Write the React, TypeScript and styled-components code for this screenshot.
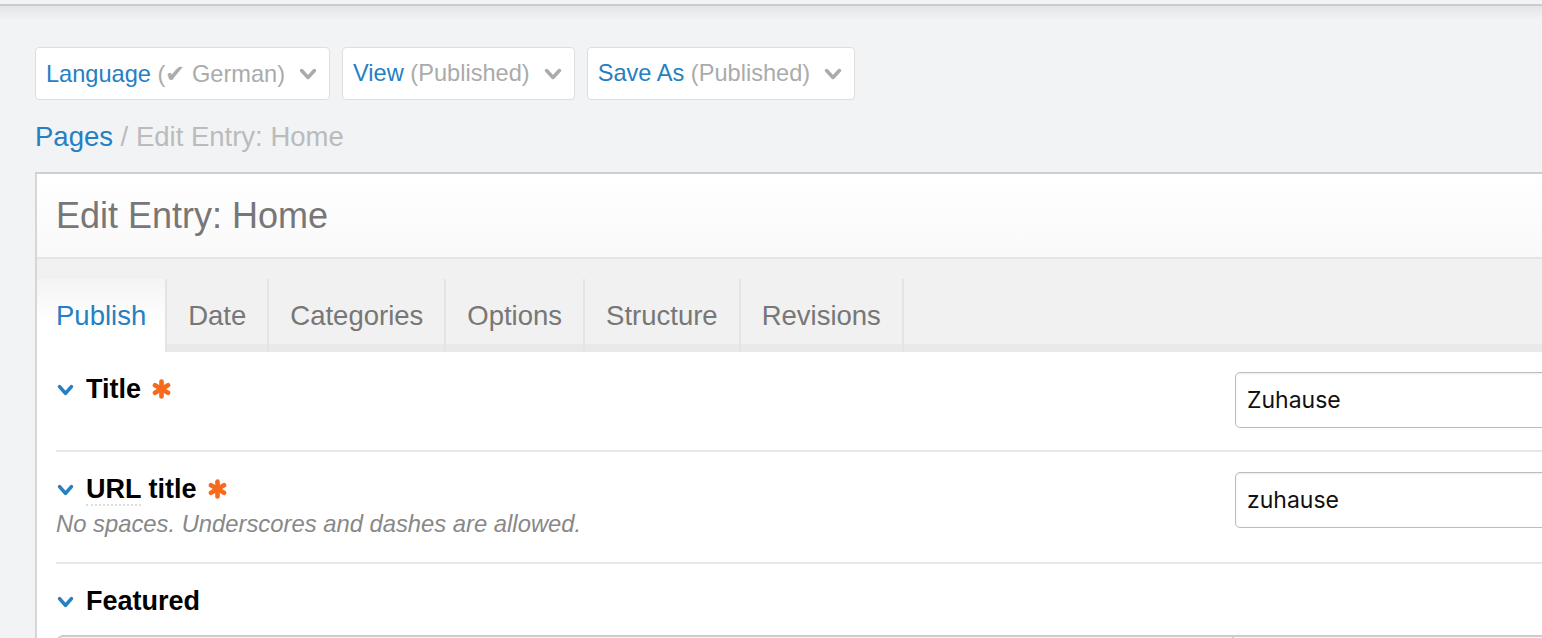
import React from 'react';
import styled, { createGlobalStyle } from 'styled-components';

const GlobalStyle = createGlobalStyle`
    html, body {
        margin: 0;
        padding: 0;
        background: #f2f3f5;
        overflow: hidden;
    }
    body {
        font-family: "Liberation Sans", Arial, sans-serif;
    }
`;

const BLUE = '#2580c3';

const TopEdge = styled.div`
    height: 4px;
    background: #f2f3f5;
    border-bottom: 2px solid #cbcbcb;
`;

const Page = styled.div`
    width: 1740px;
    padding: 41px 35px 0;
    background: linear-gradient(to bottom, #e4e5e6 0, #f2f3f5 14px);
`;

const Toolbar = styled.div`
    display: flex;
    gap: 12px;
`;

const DropButton = styled.button`
    display: inline-flex;
    align-items: center;
    gap: 14px;
    height: 53px;
    padding: 0 12px 0 10px;
    background: #fff;
    border: 1px solid #dedede;
    border-radius: 4px;
    font-family: inherit;
    font-size: 23.6px;
    cursor: pointer;

    .name {
        color: ${BLUE};
    }

    .state {
        color: #ababab;
    }

    svg {
        color: #ababab;
    }
`;

const Breadcrumb = styled.div`
    margin-top: 19px;
    line-height: 36px;
    font-size: 27.5px;
    color: #bbbbbb;

    a {
        color: ${BLUE};
        text-decoration: none;
    }
`;

const Panel = styled.div`
    margin-top: 17px;
    background: #fff;
    border-top: 2px solid #cfcfcf;
    border-left: 2px solid #d6d6d6;
`;

const PanelHeader = styled.h1`
    margin: 0;
    height: 83px;
    display: flex;
    align-items: center;
    padding-left: 19px;
    font-size: 36px;
    font-weight: normal;
    color: #777;
    background: linear-gradient(to bottom, #ffffff, #f9f9f9);
    border-bottom: 2px solid #e4e4e4;
`;

const TabBar = styled.div`
    display: flex;
    padding-top: 20px;
    background: linear-gradient(
        to bottom,
        #f1f1f1 calc(100% - 8px),
        #e9e9e9 calc(100% - 8px)
    );
`;

const Tab = styled.div<{ $active?: boolean }>`
    height: 73px;
    display: flex;
    align-items: center;
    padding: 0 ${(p) => (p.$active ? '19px' : '21px')};
    font-size: 27.5px;
    color: ${(p) => (p.$active ? BLUE : '#777')};
    border-right: 2px solid #e4e4e4;
    background: ${(p) =>
        p.$active ? 'linear-gradient(to bottom, #f4f4f4, #ffffff 60%)' : 'transparent'};
`;

const Content = styled.div`
    padding: 0 21px 0 19px;
`;

const FieldRow = styled.div<{ $last?: boolean }>`
    display: grid;
    grid-template-columns: 1179px 1fr;
    align-items: start;
    padding: 20px 0 ${(p) => (p.$last ? '0' : '22px')};
    border-bottom: ${(p) => (p.$last ? 'none' : '2px solid #e7e7e7')};
`;

const LabelRow = styled.div`
    display: flex;
    align-items: center;
    gap: 12px;
    height: 34px;
    padding-left: 1px;

    > svg {
        color: ${BLUE};
        margin-top: 2px;
    }
`;

const Label = styled.label`
    display: inline-flex;
    align-items: center;
    gap: 11px;
    font-size: 27px;
    font-weight: bold;
    color: #000;

    abbr {
        text-decoration: none;
        border-bottom: 2px dotted #ddd;
        line-height: 28px;
    }

    svg {
        color: #f76a1c;
    }
`;

const Help = styled.div`
    margin-top: 2px;
    line-height: 32px;
    font-size: 23.8px;
    font-style: italic;
    color: #888;
`;

const TextInput = styled.input`
    box-sizing: border-box;
    width: 100%;
    height: 56px;
    padding: 0 11px;
    border: 1.5px solid #bcbcbc;
    border-radius: 5px;
    box-shadow: inset 0 1px 2px rgba(0, 0, 0, 0.08);
    font-family: Inter, "Noto Sans", sans-serif;
    font-size: 23px;
    color: #111;
    outline: none;
`;

const EditorBox = styled.div`
    grid-column: 1 / -1;
    margin-top: 17px;
    margin-left: 1px;
    display: flex;
    height: 40px;
    background: #f6f6f6;
    border-top: 2px solid #cccccc;
    border-left: 2px solid #cccccc;
    border-top-left-radius: 6px;
`;

const EditorCell = styled.div`
    width: 1173px;
    border-right: 2px solid #cccccc;
`;

const Chevron: React.FC<{ w: number; h: number; stroke: number }> = ({ w, h, stroke }) => (
    <svg width={w} height={h} viewBox={`0 0 ${w} ${h}`} fill="none">
        <polyline
            points={`${stroke / 1.4},${stroke / 1.4} ${w / 2},${h - stroke / 1.4} ${w - stroke / 1.4},${stroke / 1.4}`}
            stroke="currentColor"
            strokeWidth={stroke}
            strokeLinecap="round"
            strokeLinejoin="round"
        />
    </svg>
);

const Asterisk: React.FC = () => (
    <svg width="19" height="20" viewBox="0 0 19 20">
        <g stroke="currentColor" strokeWidth="4.6" strokeLinecap="round">
            <line x1="9.5" y1="2.5" x2="9.5" y2="17.5" />
            <line x1="3" y1="6.2" x2="16" y2="13.8" />
            <line x1="3" y1="13.8" x2="16" y2="6.2" />
        </g>
    </svg>
);

interface DropProps {
    name: string;
    state: string;
}

const Drop: React.FC<DropProps> = ({ name, state }) => (
    <DropButton>
        <span>
            <span className="name">{name}</span> <span className="state">{state}</span>
        </span>
        <Chevron w={18} h={12} stroke={3.6} />
    </DropButton>
);

const FieldChevron = () => <Chevron w={17} h={12} stroke={3.6} />;

const tabs = ['Publish', 'Date', 'Categories', 'Options', 'Structure', 'Revisions'];

export default function App() {
    return (
        <>
            <GlobalStyle />
            <TopEdge />
            <Page>
                <Toolbar>
                    <Drop name="Language" state="(✔ German)" />
                    <Drop name="View" state="(Published)" />
                    <Drop name="Save As" state="(Published)" />
                </Toolbar>
                <Breadcrumb>
                    <a href="#">Pages</a> / Edit Entry: Home
                </Breadcrumb>
                <Panel>
                    <PanelHeader>Edit Entry: Home</PanelHeader>
                    <TabBar>
                        {tabs.map((t, i) => (
                            <Tab key={t} $active={i === 0}>
                                {t}
                            </Tab>
                        ))}
                    </TabBar>
                    <Content>
                        <FieldRow>
                            <div>
                                <LabelRow>
                                    <FieldChevron />
                                    <Label>
                                        Title <Asterisk />
                                    </Label>
                                </LabelRow>
                            </div>
                            <TextInput defaultValue="Zuhause" />
                        </FieldRow>
                        <FieldRow>
                            <div>
                                <LabelRow>
                                    <FieldChevron />
                                    <Label>
                                        <span>
                                            <abbr title="Uniform Resource Locator">URL</abbr> title
                                        </span>
                                        <Asterisk />
                                    </Label>
                                </LabelRow>
                                <Help>No spaces. Underscores and dashes are allowed.</Help>
                            </div>
                            <TextInput defaultValue="zuhause" />
                        </FieldRow>
                        <FieldRow $last>
                            <div>
                                <LabelRow>
                                    <FieldChevron />
                                    <Label>Featured</Label>
                                </LabelRow>
                            </div>
                            <div />
                            <EditorBox>
                                <EditorCell />
                            </EditorBox>
                        </FieldRow>
                    </Content>
                </Panel>
            </Page>
        </>
    );
}
